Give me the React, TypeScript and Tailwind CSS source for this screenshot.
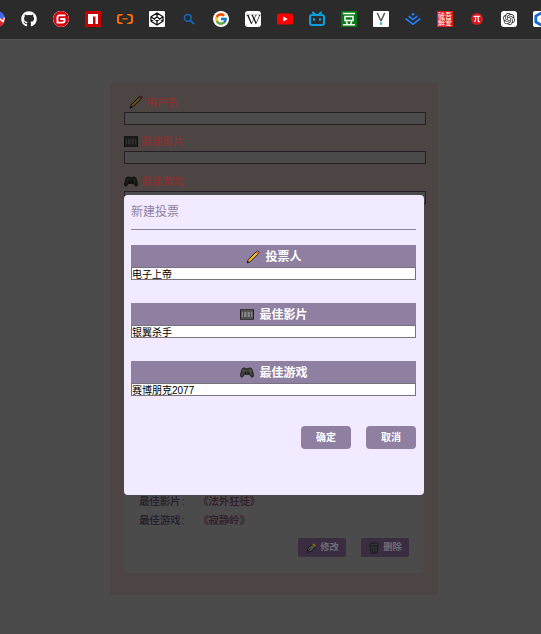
import React from 'react';
import { FaGithub, FaWikipediaW } from 'react-icons/fa';
import { FcGoogle } from 'react-icons/fc';
import { SiGitee, SiAlibabacloud, SiJuejin, SiOpenai } from 'react-icons/si';

function Tile({ className, children }: { className: string; children: React.ReactNode }) {
  return <span className={'flex h-4 w-4 shrink-0 items-center justify-center overflow-hidden ' + className}>{children}</span>;
}

function Pencil({ className = '' }: { className?: string }) {
  return (
    <svg viewBox="0 0 14 14" className={'h-3.5 w-3.5 shrink-0 ' + className}>
      <path d="M1 13L2.2 9.7L10.2 1.8Q11.3 .8 12.5 1.6Q13.4 2.6 12.3 3.9L4.3 11.7Z" fill="#f8b617" stroke="#25212b" strokeWidth="1" />
      <path d="M10 2.2L10.8 1.4Q11.6 1 12.4 1.7Q13.1 2.5 12.6 3.2L11.7 4.1Z" fill="#dc5560" />
      <path d="M1 13L1.7 10.8L3.2 12.3Z" fill="#222" />
    </svg>
  );
}

function Film({ className = '' }: { className?: string }) {
  return (
    <svg viewBox="0 0 14 11" className={'h-[11px] w-3.5 shrink-0 ' + className}>
      <rect x=".5" y=".8" width="13" height="9.4" fill="#444" stroke="#202020" />
      <path d="M1.5 2H13M1.5 9H13" stroke="#aaa" strokeWidth=".7" strokeDasharray="1 1" />
      <path d="M1.5 3H3V8H1.5ZM4 3H6.6V8H4ZM7.5 3H10.1V8H7.5ZM11 3H12.5V8H11Z" fill="#858585" />
    </svg>
  );
}

function Gamepad({ className = '' }: { className?: string }) {
  return (
    <svg viewBox="0 0 14 11" className={'h-[11px] w-3.5 shrink-0 ' + className}>
      <path d="M3.2 1L5.3 1L6 1.8H8L8.7 1H10.8Q12.2 1.4 13.3 6.8Q14 10 12.4 10.3Q11.2 10.4 9.6 7.4H4.4Q2.8 10.4 1.6 10.3Q0 10 .7 6.8Q1.8 1.4 3.2 1Z" fill="#3c4039" stroke="#1b1b1b" strokeWidth=".8" />
      <path d="M2.8 4H4.8M3.8 3V5" stroke="#666" strokeWidth=".7" />
      <circle cx="10.2" cy="2.9" r=".5" fill="#b58931" />
      <circle cx="11.2" cy="4" r=".5" fill="#a84742" />
      <circle cx="10.2" cy="5" r=".6" fill="#529e54" />
      <circle cx="5.5" cy="6" r=".9" fill="#171717" />
      <circle cx="8.5" cy="6" r=".9" fill="#171717" />
    </svg>
  );
}

function Bookmarks() {
  return (
    <div className="flex h-[39px] w-full items-center overflow-hidden bg-[#2b2b2b] pb-px">
      <div className="-ml-[11px] flex shrink-0 gap-4">
        <Tile className="rounded-full bg-[#4267e8]">
          <svg viewBox="0 0 16 16" className="h-4 w-4">
            <path d="M5 8L16 7V16H5Z" fill="#e02b2b" />
            <path d="M10.5 7.5L14 10.5L15.5 6.5" fill="none" stroke="white" strokeWidth="1.5" />
          </svg>
        </Tile>
        <FaGithub className="h-4 w-4 shrink-0 text-white" />
        <Tile className="rounded-full bg-white"><SiGitee className="h-4 w-4 text-[#d8000f]" /></Tile>
        <Tile className="bg-[#cb0000]">
          <svg viewBox="0 0 16 16" className="h-4 w-4"><path d="M3 3H13V13H10.5V5.5H8V13H3Z" fill="white" /></svg>
        </Tile>
        <SiAlibabacloud className="h-4 w-4 shrink-0 text-[#ff6a00]" />
        <Tile className="rounded-[1px] bg-white">
          <svg viewBox="0 0 16 16" className="h-4 w-4" fill="none" stroke="#111" strokeWidth="1.3" strokeLinejoin="round">
            <path d="M8 2L14 5.8V10.2L8 14L2 10.2V5.8ZM2 5.8L8 10L14 5.8M2 10.2L8 6L14 10.2M8 2V6M8 10V14" />
          </svg>
        </Tile>
        <svg viewBox="0 0 16 16" className="h-4 w-4 shrink-0">
          <circle cx="6.8" cy="6.8" r="3.4" fill="none" stroke="#1269bd" strokeWidth="1.5" />
          <path d="M9.3 9.3L13 13" stroke="#1269bd" strokeWidth="1.8" />
        </svg>
        <Tile className="rounded-full bg-white"><FcGoogle className="h-[14px] w-[14px]" /></Tile>
        <Tile className="rounded-[3px] bg-white"><FaWikipediaW className="h-[15px] w-[15px] text-[#111]" /></Tile>
        <Tile className="">
          <svg viewBox="0 0 16 16" className="h-4 w-4">
            <rect y="2.4" width="16" height="11.2" rx="2.6" fill="#f00" />
            <path d="M6.3 5.6L10.7 8L6.3 10.4Z" fill="white" />
          </svg>
        </Tile>
        <svg viewBox="0 0 16 16" className="h-4 w-4 shrink-0" fill="none" stroke="#0ba0dc" strokeWidth="2" strokeLinecap="round">
          <rect x="1" y="4" width="14" height="10" rx="2" />
          <path d="M4 1.4L6 3.2M12 1.4L10 3.2M5 8V9M11 8V9" />
        </svg>
        <Tile className="bg-[#087b16]">
          <svg viewBox="0 0 16 16" className="h-4 w-4" fill="none" stroke="white" strokeWidth="1.5">
            <path d="M2 2.5H14M2 13.7H14M4 5.5H12V9.5H4ZM5.3 10.5L6.3 13M10.7 10.5L9.7 13" />
          </svg>
        </Tile>
        <Tile className="rounded-[1px] bg-white">
          <svg viewBox="0 0 16 16" className="h-4 w-4" fill="none">
            <path d="M4.3 2L8 10L11.7 2" stroke="#555" strokeWidth="1.5" strokeLinejoin="bevel" />
            <path d="M8 11V14" stroke="#55b9dc" strokeWidth="2" />
          </svg>
        </Tile>
        <SiJuejin className="h-4 w-4 shrink-0 text-[#1e80ff]" />
        <Tile className="bg-[#e21919]">
          <span className="grid grid-cols-2 text-[7px] leading-[7.5px] text-white"><span>破</span><span>吾</span><span>解</span><span>爱</span></span>
        </Tile>
        <Tile className="">
          <span className="flex h-3 w-3 items-center justify-center rounded-full bg-[#d71920]">
            <svg viewBox="0 0 8 8" className="h-2 w-2" fill="none" stroke="white" strokeWidth="1.1"><path d="M.8 2.2Q1 1.2 2 1.2H7.3M2.8 1.5Q2.8 5 1.7 7M5.2 1.5V5.8Q5.3 7 6.8 6.5" /></svg>
          </span>
        </Tile>
        <Tile className="rounded-[3px] bg-white"><SiOpenai className="h-3 w-3 text-[#222]" /></Tile>
        <Tile className="rounded-[2px] bg-white">
          <svg viewBox="0 0 16 16" className="h-4 w-4"><path d="M11 2.5L7.5 2.3L2.8 5V11L7.5 13.7L11 13" fill="none" stroke="#126bdc" strokeWidth="2.8" /></svg>
        </Tile>
      </div>
    </div>
  );
}

function PageField({ icon, label, className }: { icon: React.ReactNode; label: string; className: string }) {
  return (
    <div className={className}>
      <div className="flex h-5 items-center gap-[3px] text-[10.67px] font-bold text-[#803434]">{icon}{label}</div>
      <div className="h-[13px] w-[302px] border border-[#252025] bg-[#4b4b4b]" />
    </div>
  );
}

function ModalField({ icon, label, value }: { icon: React.ReactNode; label: string; value: string }) {
  return (
    <div>
      <div className="flex h-[22px] items-center justify-center gap-[5px] bg-[#8f80a1] pt-px pl-px text-xs font-bold text-white">{icon}{label}</div>
      <div className="flex h-[13px] items-center border border-[#77727d] bg-white text-[10px] leading-[11px] text-black">
        <span className="relative top-px">{value}</span>
      </div>
    </div>
  );
}

function VoteRow({ label, value }: { label: string; value: string }) {
  return (
    <div className="flex h-[19px] items-center font-medium">
      <span className="w-[59px] tracking-[-0.3px]">{label}<span className="pl-px">:</span></span>
      <span className="tracking-[-0.3px] text-[#321b29]">{value}</span>
    </div>
  );
}

export default function App() {
  return (
    <div lang="zh-CN" className="relative h-[634px] w-[541px] overflow-hidden bg-[#4b4b4b] font-['Liberation_Sans','Noto_Sans_CJK_SC',sans-serif]">
      <Bookmarks />
      <div className="h-px bg-[#535353]" />
      <main className="mt-[42px] ml-[110px] flex h-[513px] w-[328px] flex-col rounded-[3px] bg-[#4d4444] pl-[14px]">
        <PageField className="pt-[10px] [&>div:first-child]:pl-[5px]" icon={<Pencil className="brightness-[.4]" />} label="用户名" />
        <PageField className="pt-[6px]" icon={<Film className="brightness-[.35]" />} label="最佳影片" />
        <PageField className="pt-[7px]" icon={<Gamepad className="brightness-[.4]" />} label="最佳游戏" />
        <section className="mt-3 flex h-[357px] w-[300px] flex-col justify-end rounded-[3px] bg-[#4b4b4b] px-[15px] pb-4 text-[10.67px] text-[#25202c]">
          <VoteRow label="最佳影片" value="《法外狂徒》" />
          <VoteRow label="最佳游戏" value="《寂静岭》" />
          <div className="mt-[9px] flex justify-end gap-[15px] text-[9.33px] font-bold text-[#706c76]">
            <div className="flex h-[19px] w-12 items-center justify-center gap-[3px] rounded-[2px] bg-[#3a2d42]">
              <svg viewBox="0 0 12 12" className="h-3 w-3">
                <path d="M2 10.5L3 6L7 2.5L10 5L7 9Z" fill="#50524c" stroke="#171719" />
                <path d="M7 2.5L9 1.5L10.8 3.3L10 5Z" fill="#8c6617" />
                <path d="M2 10.5L5.5 6.5" stroke="#171719" />
              </svg>修改
            </div>
            <div className="flex h-[19px] w-12 items-center justify-center gap-[3px] rounded-[2px] bg-[#3a2d42]">
              <svg viewBox="0 0 12 12" className="h-3 w-3" fill="#303236" stroke="#17191b">
                <path d="M2 3L3 11H9L10 3Z" /><ellipse cx="6" cy="2.5" rx="4.6" ry="1.6" />
                <path d="M4.2 6L4.6 10M6 6V10M7.8 6L7.4 10" strokeWidth=".5" />
              </svg>删除
            </div>
          </div>
        </section>
      </main>
      <div role="dialog" className="absolute top-[195px] left-[124px] h-[300px] w-[300px] rounded-[4px] bg-[#f2ebff] px-2 pl-[7px]">
        <h2 className="flex h-[35px] items-center border-b border-[#8f80a1] text-xs text-[#8f80a1]">新建投票</h2>
        <div className="mt-[15px] flex flex-col gap-[23px]">
          <ModalField icon={<Pencil />} label="投票人" value="电子上帝" />
          <ModalField icon={<Film />} label="最佳影片" value="银翼杀手" />
          <ModalField icon={<Gamepad />} label="最佳游戏" value="赛博朋克2077" />
        </div>
        <div className="mt-[30px] flex justify-end gap-[15px] text-[10px] font-bold text-white">
          <button className="h-[23px] w-[50px] rounded-[4px] bg-[#8f80a1]">确定</button>
          <button className="h-[23px] w-[50px] rounded-[4px] bg-[#8f80a1]">取消</button>
        </div>
      </div>
    </div>
  );
}
